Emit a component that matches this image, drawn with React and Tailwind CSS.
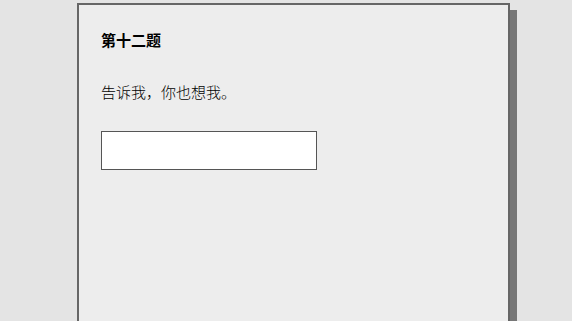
export default function App() {
  return (
    <div className="min-h-screen w-full overflow-hidden bg-[#e4e4e4] pt-[3px] pl-[77px] font-['Liberation_Sans','Noto_Sans_CJK_SC',sans-serif] text-black">
      <div className="h-[330px] w-[433px] border-2 border-[#666] bg-[#ededed] px-[22px] pt-[25px] shadow-[7px_7px_0_#777]">
        <h2 className="text-[15px] font-bold leading-[22px]">第十二题</h2>
        <p className="mt-[30px] text-[15px] font-light leading-[22px]">告诉我，你也想我。</p>
        <input
          type="text"
          className="mt-[27px] block h-[39px] w-[216px] border border-[#555] bg-white px-2 text-sm outline-none"
        />
      </div>
    </div>
  );
}
